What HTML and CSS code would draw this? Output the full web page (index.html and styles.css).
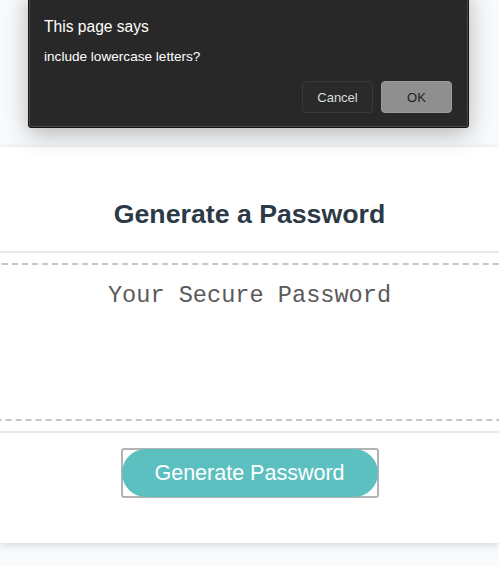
FILE: index.html
```html
<!DOCTYPE html>
<html lang="en">
<head>
<meta charset="utf-8">
<title>Password Generator</title>
<link rel="stylesheet" href="styles.css">
</head>
<body>
  <div class="dialog">
    <div class="dialog-title">This page says</div>
    <div class="dialog-msg">include lowercase letters?</div>
    <div class="dialog-actions">
      <button class="dlg-btn cancel">Cancel</button>
      <button class="dlg-btn ok">OK</button>
    </div>
  </div>

  <div class="card">
    <div class="card-header">
      <h1>Generate a Password</h1>
    </div>
    <div class="card-body">
      <div class="password">Your Secure Password</div>
    </div>
    <div class="card-footer">
      <div class="btn-frame"><span class="btn">Generate Password</span></div>
    </div>
  </div>
</body>
</html>
```

FILE: styles.css
```css
* { box-sizing: border-box; }
html, body { margin: 0; padding: 0; }
body {
  background: #f9fafb;
  font-family: "Liberation Sans", Arial, sans-serif;
  width: 499px;
  height: 566px;
  overflow: hidden;
  position: relative;
}

.dialog {
  position: absolute;
  left: 28px;
  top: -10px;
  width: 441px;
  height: 138px;
  background: #282828;
  border: 1px solid #111;
  box-shadow: inset 0 0 0 1px #4a4a4a, 0 6px 24px rgba(0,0,0,0.28);
  border-radius: 0 0 3px 3px;
  padding: 27px 16px 0 15px;
  color: #fff;
  z-index: 10;
}
.dialog-title { font-size: 15.6px; line-height: 18px; }
.dialog-msg { font-size: 13.6px; line-height: 16px; margin-top: 13px; }
.dialog-actions {
  display: flex;
  justify-content: flex-end;
  gap: 8px;
  margin-top: 16px;
}
.dlg-btn {
  width: 71px;
  height: 32px;
  border-radius: 4px;
  font-family: "Liberation Sans", Arial, sans-serif;
  font-size: 13px;
  padding: 0;
}
.cancel { background: #2a2a2a; border: 1px solid #3b3b3b; color: #ddd; }
.ok { background: #8f8f8f; border: 1px solid #9b9b9b; color: #1e1e1e; }

.card {
  margin-top: 147px;
  background: #fff;
  box-shadow: 0 2px 8px rgba(0,0,0,0.15);
  color: #2c3a47;
  height: 396px;
}
.card-header { padding-top: 52px; }
.card-header h1 {
  margin: 0;
  text-align: center;
  font-size: 26.7px;
  line-height: 30px;
  font-weight: bold;
  padding-bottom: 22px;
}
.card-header::after,
.card-footer::before {
  content: "";
  display: block;
  height: 2px;
  background: #e7e9eb;
}
.card-body { padding: 10px 0; }
.password {
  margin: 0 -4px;
  height: 158px;
  border: 2px dashed #c0c7cf;
  border-radius: 6px;
  padding-top: 17px;
  text-align: center;
  font-family: "Liberation Mono", "Courier New", monospace;
  font-size: 23.6px;
  line-height: 28px;
  color: #5a5a5a;
}
.card-footer { text-align: center; }
.btn-frame {
  display: inline-block;
  margin-top: 15px;
  width: 258px;
  height: 50px;
  border: 2px solid #b3b3b3;
  border-radius: 3px;
  background: #fff;
  padding: 0;
}
.btn {
  display: block;
  height: calc(100% + 2px);
  margin: -1px;
  border-radius: 25px;
  background: #5cc0c1;
  color: #fff;
  font-size: 21.5px;
  line-height: 48px;
}
```
